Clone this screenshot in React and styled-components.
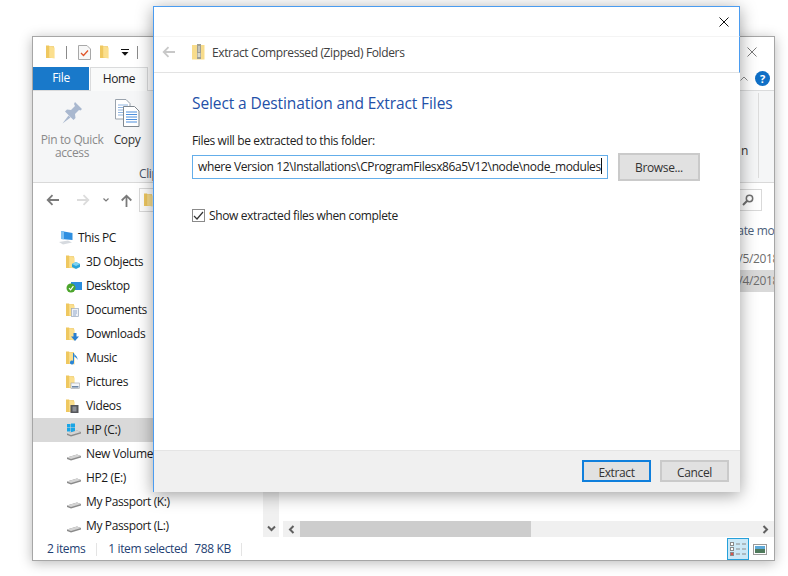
import React from 'react';
import styled, { createGlobalStyle } from 'styled-components';

const GlobalStyle = createGlobalStyle`
  html, body {
    margin: 0;
    padding: 0;
    background: #fff;
  }
  body {
    font-family: "Open Sans", "Noto Sans", sans-serif;
    font-size: 12px;
    letter-spacing: -0.37px;
    color: #1a1a1a;
  }
  * {
    box-sizing: border-box;
  }
`;

const Desktop = styled.div`
  position: relative;
  width: 788px;
  height: 576px;
  overflow: hidden;
  background: #fff;
`;

/* explorer window behind the dialog */
const ExplorerWindow = styled.div`
  position: absolute;
  left: 32px;
  top: 36px;
  width: 743px;
  height: 525px;
  display: flex;
  flex-direction: column;
  background: #fff;
  border: 1px solid #a6a6a6;
  box-shadow: 0 2px 12px rgba(0, 0, 0, 0.28);
`;

const TitleBar = styled.div`
  height: 30px;
  display: flex;
  align-items: center;
  padding: 0 17px 0 13px;
  flex-shrink: 0;
`;

const QuickSep = styled.span`
  width: 1px;
  height: 13px;
  background: #8a8a8a;
  margin: 0 ${(p) => p.$left}px 0 ${(p) => p.$right}px;
`;

const QuickItem = styled.span`
  display: flex;
  margin-right: ${(p) => p.$after || 0}px;
`;

const CloseGlyph = styled.svg`
  margin-left: auto;
  display: block;
`;

const TabRow = styled.div`
  height: 24px;
  display: flex;
  align-items: stretch;
  flex-shrink: 0;
  border-bottom: 1px solid #dadbdc;
  padding-right: 4px;
`;

const FileTab = styled.div`
  width: 56px;
  background: #1979ca;
  color: #fff;
  display: flex;
  align-items: center;
  justify-content: center;
  padding-bottom: 2px;
`;

const HomeTab = styled.div`
  width: 58px;
  margin-left: 1px;
  height: 24px;
  background: #f9fafa;
  border: 1px solid #dadbdc;
  border-bottom: none;
  display: flex;
  align-items: center;
  justify-content: center;
  padding-bottom: 2px;
  color: #222;
`;

const TabRight = styled.div`
  margin-left: auto;
  display: flex;
  align-items: center;
  gap: 7px;
`;

const HelpBadge = styled.div`
  width: 15px;
  height: 15px;
  border-radius: 50%;
  background: #0f6fc6;
  color: #fff;
  font-weight: 700;
  font-size: 11px;
  display: flex;
  align-items: center;
  justify-content: center;
`;

const Ribbon = styled.div`
  height: 92px;
  flex-shrink: 0;
  background: #f5f6f7;
  border-bottom: 1px solid #d9d9d9;
  display: flex;
  justify-content: space-between;
`;

const RibbonGroup = styled.div`
  display: flex;
  flex-direction: column;
  padding-left: 8px;
`;

const RibbonTools = styled.div`
  display: flex;
  height: 75px;
`;

const RibbonTool = styled.div`
  width: ${(p) => p.$width}px;
  display: flex;
  flex-direction: column;
  align-items: center;
  padding-top: 7px;
  text-align: center;
  white-space: nowrap;
  line-height: 13px;
  color: ${(p) => (p.$muted ? '#8a8a8a' : '#333')};
`;

const ToolIcon = styled.div`
  height: 30px;
  margin-bottom: 5px;
  display: flex;
  align-items: center;
`;

const GroupLabel = styled.div`
  padding-left: 98px;
  color: #4a5568;
  line-height: 16px;
`;

const RibbonEnd = styled.div`
  width: 33px;
  margin: 2px 15px 4px 0;
  border-right: 1px solid #dcdcdc;
  display: flex;
  justify-content: flex-end;
  padding: 50px 10px 0 0;
  color: #333;
  line-height: 16px;
`;

const AddressRow = styled.div`
  height: 37px;
  flex-shrink: 0;
  display: flex;
  align-items: flex-start;
  padding: 5px 12px 0 13px;
`;

const NavButtons = styled.div`
  width: 93px;
  height: 24px;
  display: flex;
  align-items: center;
`;

const NavArrow = styled.svg`
  display: block;
  margin-right: ${(p) => p.$after}px;
`;

const AddressBox = styled.div`
  flex: 1;
  height: 24px;
  border: 1px solid #d9d9d9;
  display: flex;
  align-items: center;
  padding-left: 4px;
`;

const SearchBox = styled.div`
  width: 150px;
  height: 22px;
  margin: 1px 0 0 8px;
  border: 1px solid #d9d9d9;
  display: flex;
  align-items: center;
  justify-content: flex-end;
  padding-right: 7px;
`;

const Body = styled.div`
  flex: 1;
  min-height: 0;
  display: flex;
  padding-bottom: 1px;
`;

const NavPane = styled.div`
  width: 230px;
  flex-shrink: 0;
  padding-top: 6px;
  overflow: hidden;
`;

const NavRow = styled.div`
  height: 24px;
  display: flex;
  align-items: center;
  padding-left: ${(p) => (p.$top ? 25 : 33)}px;
  background: ${(p) => (p.$selected ? '#d9d9d9' : 'transparent')};
  white-space: nowrap;
  color: #1a1a1a;
`;

const NavIcon = styled.span`
  width: 20px;
  height: 16px;
  display: flex;
  align-items: center;
  flex-shrink: 0;
`;

const NavLabel = styled.span`
  padding-bottom: 2px;
`;

const NavScroll = styled.div`
  width: 16px;
  flex-shrink: 0;
  background: #f0f0f0;
  display: flex;
  align-items: flex-end;
  justify-content: center;
  padding-bottom: 5px;
`;

const MainPane = styled.div`
  flex: 1;
  min-width: 0;
  display: flex;
  flex-direction: column;
  padding-left: 4px;
`;

const ListArea = styled.div`
  flex: 1;
  display: flex;
  flex-direction: column;
  align-items: stretch;
`;

const ListRow = styled.div`
  height: 22px;
  margin-top: ${(p) => p.$offset || 0}px;
  padding-left: ${(p) => (p.$header ? 446 : 449)}px;
  padding-bottom: 2px;
  display: flex;
  align-items: center;
  overflow: hidden;
  white-space: nowrap;
  background: ${(p) => (p.$selected ? '#d9d9d9' : 'transparent')};
  color: ${(p) => (p.$header ? '#4c607a' : '#6d6d6d')};
`;

const HScroll = styled.div`
  height: 16px;
  flex-shrink: 0;
  display: flex;
  background: #f0f0f0;
  align-items: stretch;
`;

const ScrollButton = styled.div`
  width: 17px;
  display: flex;
  align-items: center;
  justify-content: center;
  margin-left: ${(p) => (p.$end ? 'auto' : 0)};
`;

const ScrollThumb = styled.div`
  width: 231px;
  background: #cdcdcd;
`;

const StatusBar = styled.div`
  height: 22px;
  flex-shrink: 0;
  display: flex;
  align-items: center;
  color: #1f3f73;
  padding-left: 14px;
  padding-right: 7px;
`;

const StatusText = styled.span`
  padding-bottom: 2px;
  margin-left: ${(p) => p.$indent || 0}px;
`;

const StatusSep = styled.span`
  width: 1px;
  height: 13px;
  background: #e4e4e4;
  margin: 0 ${(p) => p.$gap}px;
`;

const ViewButtons = styled.div`
  margin-left: auto;
  display: flex;
  align-items: center;
  height: 22px;
  gap: 4px;
`;

const DetailsView = styled.div`
  width: 22px;
  height: 22px;
  background: #cce8f6;
  border: 1px solid #26a0da;
  display: flex;
  align-items: center;
  justify-content: center;
`;

/* extract dialog */
const Dialog = styled.div`
  position: absolute;
  left: 153px;
  top: 6px;
  width: 587px;
  height: 486px;
  display: flex;
  flex-direction: column;
  background: #fff;
  border-left: 1px solid #4b9cf0;
  border-top: 1px solid #4b9cf0;
  box-shadow: 0 3px 16px rgba(0, 0, 0, 0.38);
`;

const DialogTop = styled.div`
  height: 30px;
  flex-shrink: 0;
  display: flex;
  justify-content: flex-end;
  align-items: center;
  padding-right: 10px;
  border-right: 1px solid #4b9cf0;
  border-bottom: 1px solid #f4f4f4;
`;

const DialogHeader = styled.div`
  height: 36px;
  flex-shrink: 0;
  display: flex;
  align-items: center;
  padding: 0 0 5px 8px;
  border-right: 1px solid #4b9cf0;
  border-bottom: 1px solid #e3e3e3;
  color: #404040;
`;

const HeaderZip = styled.span`
  margin: 0 7px 0 17px;
  display: flex;
`;

const DialogBody = styled.div`
  flex: 1;
  padding: 19px 40px 0 38px;
`;

const DialogTitle = styled.h1`
  margin: 0;
  font-size: 15.5px;
  line-height: 22px;
  font-weight: 400;
  letter-spacing: -0.1px;
  color: #2350a8;
`;

const FieldLabel = styled.div`
  margin-top: 19px;
  line-height: 16px;
  color: #222;
`;

const PathRow = styled.div`
  display: flex;
  align-items: center;
  gap: 10px;
  margin-top: 4px;
`;

const PathInput = styled.div`
  width: 416px;
  height: 24px;
  border: 1px solid #64aeea;
  display: flex;
  align-items: center;
  padding: 0 0 2px 5px;
  white-space: nowrap;
  overflow: hidden;
  color: #222;
`;

const TextCaret = styled.span`
  width: 1px;
  height: 16px;
  background: #111;
  flex-shrink: 0;
`;

const DialogButton = styled.button`
  width: ${(p) => p.$width}px;
  height: ${(p) => p.$height}px;
  padding: ${(p) => (p.$footer ? '2px 0 0' : 0)};
  background: #e1e1e1;
  border: ${(p) => (p.$primary ? '2px solid #0f7fdc' : '2px solid #cacaca')};
  font: inherit;
  letter-spacing: inherit;
  color: #333;
`;

const CheckRow = styled.label`
  display: flex;
  align-items: center;
  gap: 4px;
  margin-top: 26px;
  color: #222;
`;

const CheckBox = styled.span`
  width: 13px;
  height: 13px;
  border: 1px solid #8a8a8a;
  display: flex;
  align-items: center;
  justify-content: center;
  background: #fff;
`;

const DialogFooter = styled.div`
  height: 42px;
  flex-shrink: 0;
  display: flex;
  justify-content: flex-end;
  gap: 9px;
  align-items: flex-start;
  padding: 9px 11px 0 0;
  background: #f0f0f0;
  border-top: 1px solid #e5e5e5;
`;

/* icons */
const FolderShape = ({ children, w = 14 }) => (
  <svg width={w} height="14" viewBox={`0 0 ${w} 14`}>
    <path d="M0 0.5H3L3.6 1.3H8V13H0Z" fill="#efc860" />
    <path d="M3.2 1.6L8.6 2.6V13.6L3.2 12.6Z" fill="#fbdf8e" />
    {children}
  </svg>
);

const CubeOverlay = () => (
  <g>
    <path d="M6 9L10 7L14 9V12L10 14L6 12Z" fill="#2aa3d8" />
    <path d="M6 9L10 7L14 9L10 11Z" fill="#7fd3f0" />
  </g>
);
const DocOverlay = () => (
  <g>
    <rect x="5.5" y="5.5" width="7" height="8" fill="#eef1f6" stroke="#9aa9bd" strokeWidth="0.7" />
    <path d="M7 8h4M7 10h4M7 12h3" stroke="#7d9ac2" strokeWidth="0.8" />
  </g>
);
const ArrowOverlay = () => <path d="M7.5 6H10.5V9.5H13L9 14L5 9.5H7.5Z" fill="#2a7fd0" />;
const MusicOverlay = () => (
  <path d="M8 2V11.5A2 2 0 1 1 7 9.8V2H8C8 4 12 5 11.5 9C11 7 9.5 6 8.5 6" fill="#2a86d8" />
);
const PictureOverlay = () => (
  <g>
    <rect x="5" y="8" width="8.5" height="5.5" fill="#f4f6f8" stroke="#9aa0a8" strokeWidth="0.6" />
    <path d="M6 11h6.5v1.6H6z" fill="#6d87a6" />
  </g>
);
const FilmOverlay = () => (
  <g>
    <rect x="4.5" y="6" width="8" height="8" fill="#55565a" />
    <rect x="6.5" y="7.5" width="4" height="5" fill="#8c8f96" />
  </g>
);

const FolderIcon = ({ overlay: Overlay }) => (
  <FolderShape>{Overlay && <Overlay />}</FolderShape>
);

const DesktopIcon = () => (
  <svg width="16" height="14" viewBox="0 0 16 14">
    <rect x="5" y="3" width="11" height="8" fill="#2a8ddc" />
    <circle cx="5" cy="9" r="4.5" fill="#4ca52c" />
    <path d="M3 9.2L4.6 10.8L7.4 7.2" fill="none" stroke="#fff" strokeWidth="1.2" />
  </svg>
);

const PcIcon = () => (
  <svg width="16" height="16" viewBox="0 0 16 16">
    <path d="M3 1L14.5 3V10L3 9Z" fill="#2f8fe0" />
    <path d="M3 1L6 1.5V9.3L3 9Z" fill="#7cc0f2" />
    <path d="M1 12L10 10.5L14 12.5L5 14.5Z" fill="#d6dadf" />
  </svg>
);

const DriveIcon = ({ system }) => (
  <svg width="16" height="14" viewBox="0 0 16 14">
    {system && (
      <g fill="#19a5e6">
        <rect x="1" y="1" width="3.5" height="3.5" />
        <rect x="5" y="0.5" width="4" height="4" />
        <rect x="1" y="5" width="3.5" height="3.5" />
        <rect x="5" y="5" width="4" height="4" />
      </g>
    )}
    <path d="M1 10.5L11 7.5L15 9V10.5L5 13.5L1 12Z" fill="#8a8a8a" />
    <path d="M1 10.5L11 7.5L15 9L5 12Z" fill="#d4d4d4" />
  </svg>
);

const ChevronDown = () => (
  <svg width="9" height="7" viewBox="0 0 9 7">
    <path d="M1 1.5L4.5 5L8 1.5" fill="none" stroke="#606060" strokeWidth="2" />
  </svg>
);

const ChevronLeft = () => (
  <svg width="7" height="9" viewBox="0 0 7 9">
    <path d="M5.5 1L2 4.5L5.5 8" fill="none" stroke="#606060" strokeWidth="2" />
  </svg>
);

const ChevronRight = () => (
  <svg width="7" height="9" viewBox="0 0 7 9">
    <path d="M1.5 1L5 4.5L1.5 8" fill="none" stroke="#606060" strokeWidth="2" />
  </svg>
);

const BackArrow = ({ color = '#7a7a7a', after = 0 }) => (
  <NavArrow $after={after} width="13" height="12" viewBox="0 0 13 12">
    <path d="M13 6H2M6.5 1.2L1.7 6L6.5 10.8" fill="none" stroke={color} strokeWidth="1.8" />
  </NavArrow>
);

const ForwardArrow = ({ after }) => (
  <NavArrow $after={after} width="13" height="12" viewBox="0 0 13 12">
    <path d="M0 6H11M6.5 1.2L11.3 6L6.5 10.8" fill="none" stroke="#dcdcdc" strokeWidth="1.8" />
  </NavArrow>
);

const UpArrow = () => (
  <NavArrow $after={0} width="13" height="13" viewBox="0 0 13 13">
    <path d="M6.5 13V2M1.7 6.5L6.5 1.7L11.3 6.5" fill="none" stroke="#7a7a7a" strokeWidth="1.8" />
  </NavArrow>
);

const SmallChevron = () => (
  <NavArrow $after={11} width="6" height="4" viewBox="0 0 6 4">
    <path d="M0.5 0.5L3 3L5.5 0.5" fill="none" stroke="#7a7a7a" strokeWidth="1.2" />
  </NavArrow>
);

const CloseIcon = ({ color = '#111' }) => (
  <CloseGlyph width="10" height="10" viewBox="0 0 10 10">
    <path d="M0.5 0.5L9.5 9.5M9.5 0.5L0.5 9.5" stroke={color} strokeWidth="1" />
  </CloseGlyph>
);

const PinIcon = () => (
  <svg width="22" height="24" viewBox="0 0 22 24">
    <path
      d="M14 1L21 8L19.5 9.5L18 9L14 13L14.5 17L12.5 19L4 10.5L6 8.5L10 9L14 5L13 3Z"
      fill="#a9b8cf"
    />
    <path d="M7.5 14.5L1.5 22.5L9.5 16.5Z" fill="#a9b8cf" />
  </svg>
);

const CopyIcon = () => (
  <svg width="25" height="28" viewBox="0 0 25 28">
    <path d="M0.5 0.5H11L15 4.5V20H0.5Z" fill="#fff" stroke="#9aa3ad" />
    <path d="M3 6h10M3 8.5h10M3 11h10M3 13.5h10M3 16h10" stroke="#8fb4e0" />
    <path d="M8.5 7.5H19.5L24 12V27.5H8.5Z" fill="#fff" stroke="#7f8890" />
    <path d="M11 13h11M11 15.5h11M11 18h11M11 20.5h11M11 23h11" stroke="#4d8fdc" />
  </svg>
);

const DocCheckIcon = () => (
  <svg width="13" height="15" viewBox="0 0 13 15">
    <path d="M0.5 0.5H9L12.5 4V14.5H0.5Z" fill="#f7f7f7" stroke="#a8a8a8" />
    <path d="M3 8L5.5 10.5L10 5.5" fill="none" stroke="#e0552a" strokeWidth="1.3" />
  </svg>
);

const QuickArrow = () => (
  <svg width="8" height="7" viewBox="0 0 8 7">
    <path d="M0 0H8V1H0Z" fill="#111" />
    <path d="M0.5 3H7.5L4 6.8Z" fill="#111" />
  </svg>
);

const ZipFolderIcon = () => (
  <svg width="13" height="16" viewBox="0 0 13 16">
    <path d="M0 1H12.5V15.5H0Z" fill="#f8dc8b" />
    <rect x="5" y="0" width="4" height="15" fill="#9f9f94" />
    <path d="M6 3h2M6 5h2M6 7h2" stroke="#e8e8e0" />
    <rect x="5.6" y="9" width="2.8" height="4" fill="#d8d8cc" />
  </svg>
);

const SearchIcon = () => (
  <svg width="12" height="12" viewBox="0 0 12 12">
    <circle cx="7.5" cy="4.5" r="3.2" fill="none" stroke="#707070" strokeWidth="1.5" />
    <path d="M5.2 6.8L1 11" stroke="#707070" strokeWidth="2" />
  </svg>
);

const DetailsGlyph = () => (
  <svg width="16" height="14" viewBox="0 0 16 14">
    <rect x="0.5" y="0.5" width="3" height="3" fill="#fff" stroke="#8a8a8a" />
    <rect x="0.5" y="5.5" width="3" height="3" fill="#fff" stroke="#8a8a8a" />
    <rect x="0.5" y="10.5" width="3" height="3" fill="#e0524a" stroke="#8a8a8a" />
    <path d="M6 2h4M12 2h4M6 7h4M12 7h4M6 12h4M12 12h4" stroke="#8a8a8a" />
  </svg>
);

const ThumbGlyph = () => (
  <svg width="14" height="11" viewBox="0 0 14 11">
    <rect x="0.5" y="0.5" width="13" height="10" fill="#fff" stroke="#9a9a9a" />
    <rect x="2" y="2" width="10" height="3" fill="#5da9d8" />
    <rect x="2" y="5" width="10" height="4" fill="#4f7a5c" />
  </svg>
);

const TickGlyph = () => (
  <svg width="11" height="10" viewBox="0 0 11 10">
    <path d="M1 5L4 8L10 1" fill="none" stroke="#333" strokeWidth="1.2" />
  </svg>
);

const navItems = [
  { label: 'This PC', icon: <PcIcon />, top: true },
  { label: '3D Objects', icon: <FolderIcon overlay={CubeOverlay} /> },
  { label: 'Desktop', icon: <DesktopIcon /> },
  { label: 'Documents', icon: <FolderIcon overlay={DocOverlay} /> },
  { label: 'Downloads', icon: <FolderIcon overlay={ArrowOverlay} /> },
  { label: 'Music', icon: <FolderIcon overlay={MusicOverlay} /> },
  { label: 'Pictures', icon: <FolderIcon overlay={PictureOverlay} /> },
  { label: 'Videos', icon: <FolderIcon overlay={FilmOverlay} /> },
  { label: 'HP (C:)', icon: <DriveIcon system />, selected: true },
  { label: 'New Volume (D:)', icon: <DriveIcon /> },
  { label: 'HP2 (E:)', icon: <DriveIcon /> },
  { label: 'My Passport (K:)', icon: <DriveIcon /> },
  { label: 'My Passport (L:)', icon: <DriveIcon /> },
];

const Explorer = () => (
  <ExplorerWindow>
    <TitleBar>
      <FolderShape w={9} />
      <QuickSep $right={11} $left={11} />
      <QuickItem $after={9}>
        <DocCheckIcon />
      </QuickItem>
      <QuickItem $after={11}>
        <FolderShape w={10} />
      </QuickItem>
      <QuickArrow />
      <QuickSep $right={8} $left={0} />
      <CloseIcon color="#7a7a7a" />
    </TitleBar>
    <TabRow>
      <FileTab>File</FileTab>
      <HomeTab>Home</HomeTab>
      <TabRight>
        <svg width="8" height="5" viewBox="0 0 8 5">
          <path d="M0.5 4.5L4 1L7.5 4.5" fill="none" stroke="#8a8a8a" />
        </svg>
        <HelpBadge>?</HelpBadge>
      </TabRight>
    </TabRow>
    <Ribbon>
      <RibbonGroup>
        <RibbonTools>
          <RibbonTool $width={62} $muted>
            <ToolIcon>
              <PinIcon />
            </ToolIcon>
            Pin to Quick
            <br />
            access
          </RibbonTool>
          <RibbonTool $width={48}>
            <ToolIcon>
              <CopyIcon />
            </ToolIcon>
            Copy
          </RibbonTool>
        </RibbonTools>
        <GroupLabel>Clipboard</GroupLabel>
      </RibbonGroup>
      <RibbonEnd>n</RibbonEnd>
    </Ribbon>
    <AddressRow>
      <NavButtons>
        <BackArrow after={18} />
        <ForwardArrow after={13} />
        <SmallChevron />
        <UpArrow />
      </NavButtons>
      <AddressBox>
        <FolderShape w={9} />
      </AddressBox>
      <SearchBox>
        <SearchIcon />
      </SearchBox>
    </AddressRow>
    <Body>
      <NavPane>
        {navItems.map((item) => (
          <NavRow key={item.label} $top={item.top} $selected={item.selected}>
            <NavIcon>{item.icon}</NavIcon>
            <NavLabel>{item.label}</NavLabel>
          </NavRow>
        ))}
      </NavPane>
      <NavScroll>
        <ChevronDown />
      </NavScroll>
      <MainPane>
        <ListArea>
          <ListRow $header>Date modified</ListRow>
          <ListRow $offset={6}>9/5/2018 10:12 AM</ListRow>
          <ListRow $selected>9/4/2018 2:40 PM</ListRow>
        </ListArea>
        <HScroll>
          <ScrollButton>
            <ChevronLeft />
          </ScrollButton>
          <ScrollThumb />
          <ScrollButton $end>
            <ChevronRight />
          </ScrollButton>
        </HScroll>
      </MainPane>
    </Body>
    <StatusBar>
      <StatusText>2 items</StatusText>
      <StatusSep $gap={11} />
      <StatusText>1 item selected</StatusText>
      <StatusText $indent={7}>788 KB</StatusText>
      <StatusSep $gap={10} />
      <ViewButtons>
        <DetailsView>
          <DetailsGlyph />
        </DetailsView>
        <ThumbGlyph />
      </ViewButtons>
    </StatusBar>
  </ExplorerWindow>
);

const ExtractDialog = () => (
  <Dialog>
    <DialogTop>
      <CloseIcon />
    </DialogTop>
    <DialogHeader>
      <BackArrow color="#c8c8c8" />
      <HeaderZip>
        <ZipFolderIcon />
      </HeaderZip>
      Extract Compressed (Zipped) Folders
    </DialogHeader>
    <DialogBody>
      <DialogTitle>Select a Destination and Extract Files</DialogTitle>
      <FieldLabel>Files will be extracted to this folder:</FieldLabel>
      <PathRow>
        <PathInput>
          where Version 12\Installations\CProgramFilesx86a5V12\node\node_modules
          <TextCaret />
        </PathInput>
        <DialogButton $width={82} $height={28}>
          Browse...
        </DialogButton>
      </PathRow>
      <CheckRow>
        <CheckBox>
          <TickGlyph />
        </CheckBox>
        Show extracted files when complete
      </CheckRow>
    </DialogBody>
    <DialogFooter>
      <DialogButton $primary $footer $width={69} $height={22}>
        Extract
      </DialogButton>
      <DialogButton $footer $width={69} $height={22}>
        Cancel
      </DialogButton>
    </DialogFooter>
  </Dialog>
);

const App = () => (
  <Desktop>
    <GlobalStyle />
    <Explorer />
    <ExtractDialog />
  </Desktop>
);

export default App;
